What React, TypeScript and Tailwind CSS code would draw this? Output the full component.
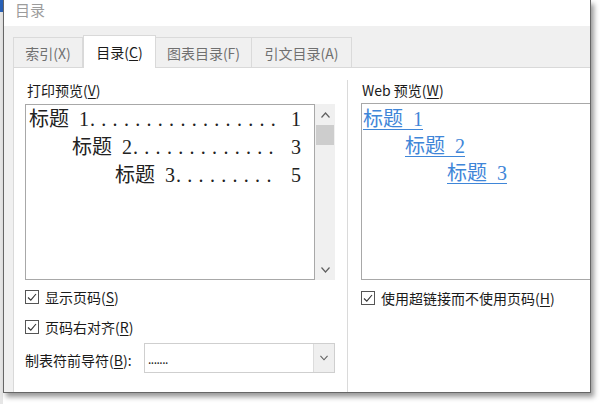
import type { ReactNode } from 'react';

const ui = "font-['Noto_Sans_CJK_SC','Noto_Sans',sans-serif]";
const song = "font-['Liberation_Serif','Noto_Sans_CJK_SC',serif]";

function Key({ children }: { children: ReactNode }) {
  return <span className="underline underline-offset-2 decoration-1">{children}</span>;
}

function Check({ label }: { label: ReactNode }) {
  return (
    <div className="flex items-center h-5 text-[14px] text-[#1a1a1a]">
      <span className="w-[14px] h-[14px] border border-[#555] bg-white flex items-center justify-center">
        <svg width="12" height="12" viewBox="0 0 12 12">
          <polyline points="2,6.5 4.8,9.2 10,3" fill="none" stroke="#333" strokeWidth="1.1" />
        </svg>
      </span>
      <span className="ml-[6px] leading-5">{label}</span>
    </div>
  );
}

function Chevron({ up, className }: { up?: boolean; className?: string }) {
  return (
    <svg width="9" height="6" viewBox="0 0 9 6" className={className}>
      <polyline
        points={up ? '0.5,5.5 4.5,1 8.5,5.5' : '0.5,0.5 4.5,5 8.5,0.5'}
        fill="none"
        stroke="#606060"
        strokeWidth="1.2"
      />
    </svg>
  );
}

const tocLines = [
  { n: '1', page: '1', indent: 'pl-[3px]', dots: 17 },
  { n: '2', page: '3', indent: 'pl-[46px]', dots: 13 },
  { n: '3', page: '5', indent: 'pl-[89px]', dots: 9 },
];

const webLines = [
  { n: '1', indent: 'pl-[1px]' },
  { n: '2', indent: 'pl-[43px]' },
  { n: '3', indent: 'pl-[85px]' },
];

function Tab({ label, active, width }: { label: ReactNode; active?: boolean; width: string }) {
  if (active) {
    return (
      <div
        className={`${width} h-[33px] -mb-px relative z-10 bg-white border border-b-0 border-[#d9d9d9] flex items-center justify-center text-[14px] text-[#1a1a1a] pt-[1px]`}
      >
        {label}
      </div>
    );
  }
  return (
    <div
      className={`${width} h-[30px] bg-[#f0f0f0] border border-b-0 border-l-0 first:border-l border-[#dadada] flex items-center justify-center text-[14px] text-[#707070] pt-[2px]`}
    >
      {label}
    </div>
  );
}

export default function App() {
  return (
    <div className={`w-[600px] h-[404px] bg-white overflow-hidden flex ${ui}`}>
      <div className="w-[3px] h-full flex flex-col">
        <div className="h-[12px] bg-[#2a62b8]" />
        <div className="flex-1 bg-[#e6e6e6]" />
      </div>
      <div className="w-[588px] h-[393px] border border-t-0 border-[#666] bg-white flex flex-col shadow-[3px_4px_5px_rgba(0,0,0,0.4)]">
        <div className="h-[26px] pl-[11px] text-[15px] leading-[20px] text-[#9c9c9c]">目录</div>
        <div className="flex-1 bg-[#f0f0f0] pt-[9px] pl-[9px] flex flex-col">
          <div className="flex items-end">
            <Tab width="w-[70px]" label="索引(X)" />
            <Tab
              width="w-[73px]"
              active
              label={
                <span>
                  目录(<Key>C</Key>)
                </span>
              }
            />
            <Tab width="w-[96px]" label="图表目录(F)" />
            <Tab width="w-[100px]" label="引文目录(A)" />
          </div>
          <div className="flex-1 bg-white border border-r-0 border-b-0 border-[#d9d9d9] flex">
            {/* left: print preview */}
            <div className="w-[333px] pl-[11px] pt-[12px] flex flex-col">
              <div className="h-5 leading-5 text-[14px] text-[#1a1a1a] pl-[2px]">
                打印预览(<Key>V</Key>)
              </div>
              <div className="mt-[4px] h-[176px] flex">
                <div className={`w-[290px] border border-[#a8a8a8] ${song} text-[20px] text-[#222] leading-[28px]`}>
                  {tocLines.map((l) => (
                    <div key={l.n} className={`flex pr-[13px] ${l.indent}`}>
                      <span className="whitespace-pre">标题  {l.n}</span>
                      <span className="ml-[1px] tracking-[6.3px] whitespace-nowrap">{'.'.repeat(l.dots)}</span>
                      <span className="flex-1" />
                      <span>{l.page}</span>
                    </div>
                  ))}
                </div>
                <div className="w-[20px] bg-[#f0f0f0] flex flex-col items-center">
                  <div className="h-[21px] flex items-center justify-center">
                    <Chevron up />
                  </div>
                  <div className="w-[18px] h-[20px] bg-[#cdcdcd]" />
                  <div className="flex-1" />
                  <div className="h-[20px] flex items-center justify-center">
                    <Chevron />
                  </div>
                </div>
              </div>
              <div className="mt-[7px]">
                <Check label={<>显示页码(<Key>S</Key>)</>} />
              </div>
              <div className="mt-[10px]">
                <Check label={<>页码右对齐(<Key>R</Key>)</>} />
              </div>
              <div className="mt-[6px] flex items-center">
                <span className="w-[119px] text-[14px] text-[#1a1a1a] leading-5 pt-[4px]">
                  制表符前导符(<Key>B</Key>):
                </span>
                <div className="w-[191px] h-[30px] border border-[#cfcfcf] flex">
                  <div className="flex-1 pl-[3px] text-[12px] leading-[30px] text-[#222] tracking-[-0.5px]">.......</div>
                  <div className="w-[21px] bg-[#efefef] border-l border-[#dcdcdc] flex items-center justify-center">
                    <Chevron className="w-[8px]" />
                  </div>
                </div>
              </div>
            </div>
            {/* right: web preview */}
            <div className="flex-1 mt-[12px] border-l border-[#dadada] pl-[13px] flex flex-col">
              <div className="h-5 leading-5 text-[14px] text-[#1a1a1a] pl-[1px]">
                Web 预览(<Key>W</Key>)
              </div>
              <div className={`mt-[3px] h-[177px] border border-r-0 border-[#a8a8a8] ${song} text-[20px] leading-[27px] text-[#3f86d8] pt-[2px]`}>
                {webLines.map((l) => (
                  <div key={l.n} className={l.indent}>
                    <span className="underline underline-offset-[3px] decoration-1 whitespace-pre">标题  {l.n}</span>
                  </div>
                ))}
              </div>
              <div className="mt-[8px]">
                <Check label={<>使用超链接而不使用页码(<Key>H</Key>)</>} />
              </div>
            </div>
          </div>
        </div>
      </div>
    </div>
  );
}
